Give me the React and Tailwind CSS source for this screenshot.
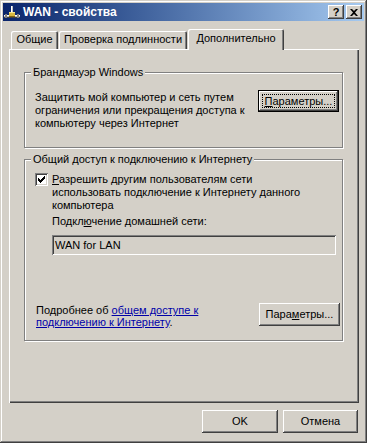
import React from "react";

const raised =
  "shadow-[inset_-1px_-1px_#404040,inset_1px_1px_#ffffff,inset_-2px_-2px_#808080,inset_2px_2px_#d4d0c8]";

function Button({ children, className = "", isDefault = false }) {
  if (isDefault) {
    return (
      <div className={"border border-black bg-[#d4d0c8] " + className}>
        <div className={"h-full w-full p-[3px] " + raised}>
          <div className="h-full w-full border border-dotted border-black flex items-center justify-center leading-none">
            {children}
          </div>
        </div>
      </div>
    );
  }
  return (
    <div className={"bg-[#d4d0c8] flex items-center justify-center leading-none " + raised + " " + className}>
      {children}
    </div>
  );
}

function Group({ title, className = "", children }) {
  return (
    <div
      className={
        "relative border border-[#808080] shadow-[inset_1px_1px_#ffffff,1px_1px_#ffffff] " + className
      }
    >
      <span className="absolute left-[6px] top-[-7px] bg-[#d4d0c8] px-[2px] leading-[13px]">{title}</span>
      {children}
    </div>
  );
}

function NetIcon() {
  return (
    <svg width="16" height="16" viewBox="0 0 16 16">
      <rect x="7" y="2" width="2" height="9" fill="#c0c0c0" />
      <rect x="7" y="2" width="1" height="9" fill="#ffffff" />
      <rect x="0" y="11" width="16" height="2" fill="#c0c0c0" />
      <rect x="0" y="11" width="16" height="1" fill="#ffffff" />
      <rect x="0" y="13" width="16" height="1" fill="#404040" />
      <rect x="5" y="8" width="6" height="4" fill="#d8b840" />
      <rect x="5" y="8" width="6" height="1" fill="#f8e890" />
      <rect x="5" y="12" width="6" height="1" fill="#806010" />
      <rect x="1" y="10" width="2" height="4" fill="#808080" />
      <rect x="13" y="10" width="2" height="4" fill="#808080" />
    </svg>
  );
}

export default function App() {
  return (
    <div className="w-[367px] h-[443px] bg-[#d4d0c8] p-[3px] flex flex-col text-[11px] text-black font-['Liberation_Sans',Arial,sans-serif] shadow-[inset_-1px_-1px_#404040,inset_1px_1px_#d4d0c8,inset_-2px_-2px_#808080,inset_2px_2px_#ffffff]">
      {/* title bar */}
      <div className="h-[18px] flex items-center bg-linear-to-r from-[#0a246a] to-[#a6caf0] pl-[1px] pr-[2px]">
        <NetIcon />
        <span className="ml-[3px] font-bold text-white text-[12px] leading-none">WAN - свойства</span>
        <div className="ml-auto flex gap-[2px]">
          <div className={"w-[16px] h-[14px] bg-[#d4d0c8] flex items-center justify-center font-bold text-[11px] leading-none " + raised}>
            ?
          </div>
          <div className={"w-[16px] h-[14px] bg-[#d4d0c8] flex items-center justify-center " + raised}>
            <svg width="8" height="7" viewBox="0 0 8 7">
              <path d="M0 0h2l2 2 2-2h2L5 3.5 8 7H6L4 5 2 7H0l3-3.5z" fill="#000" />
            </svg>
          </div>
        </div>
      </div>

      {/* tabs */}
      <div className="mt-[8px] h-[20px] flex items-end pl-[8px]">
        <div className="w-[47px] h-[18px] rounded-tl-[2px] rounded-tr-[2px] shadow-[inset_1px_1px_#ffffff,inset_-1px_0_#404040,inset_-2px_0_#808080] flex items-center justify-center leading-none pb-[1px]">
          Общие
        </div>
        <div className="ml-[1px] w-[128px] h-[18px] rounded-tl-[2px] rounded-tr-[2px] shadow-[inset_1px_1px_#ffffff,inset_-1px_0_#404040,inset_-2px_0_#808080] flex items-center justify-center leading-none pb-[1px]">
          Проверка подлинности
        </div>
        <div className="relative z-10 -mb-[1px] ml-[1px] w-[96px] h-[21px] bg-[#d4d0c8] rounded-tl-[2px] rounded-tr-[2px] shadow-[inset_1px_1px_#ffffff,inset_-1px_0_#404040,inset_-2px_0_#808080] flex items-center justify-center leading-none pb-[3px]">
          Дополнительно
        </div>
      </div>

      {/* panel */}
      <div className="ml-[6px] w-[350px] h-[354px] pl-[15px] shadow-[inset_1px_1px_#ffffff,inset_-1px_-1px_#404040,inset_-2px_-2px_#808080]">
        <Group title="Брандмауэр Windows" className="mt-[23px] w-[319px] h-[76px]">
          <div className="flex items-start pt-[17px] pl-[10px] pr-[3px]">
            <div className="mt-[1px] leading-[13px] flex-1">
              Защитить мой компьютер и сеть путем
              <br />
              ограничения или прекращения доступа к
              <br />
              компьютеру через Интернет
            </div>
            <Button isDefault className="w-[81px] h-[22px]">
              <span>
                <span className="underline">П</span>араметры...
              </span>
            </Button>
          </div>
        </Group>

        <Group title="Общий доступ к подключению к Интернету" className="mt-[11px] w-[319px] h-[182px] flex flex-col">
          <div className="flex items-start pt-[13px] pl-[10px]">
            <div className="w-[13px] h-[13px] bg-white shadow-[inset_1px_1px_#808080,inset_-1px_-1px_#ffffff,inset_2px_2px_#404040,inset_-2px_-2px_#d4d0c8] flex items-center justify-center">
              <svg width="7" height="7" viewBox="0 0 7 7">
                <path d="M0 2h1v1h1v1h1v-1h1v-1h1v-1h1v-1h1v3h-1v1h-1v1h-1v1h-1v1h-1v-1h-1v-1h-1v-1h-1z" fill="#000" />
              </svg>
            </div>
            <div className="ml-[4px] leading-[13px]">
              <span className="underline">Р</span>азрешить другим пользователям сети
              <br />
              использовать подключение к Интернету данного
              <br />
              компьютера
            </div>
          </div>
          <div className="pl-[27px] mt-[3px] leading-[13px]">
            Подкл<span className="underline">ю</span>чение домашней сети:
          </div>
          <div className="ml-[27px] mt-[7px] w-[284px] h-[20px] bg-[#d4d0c8] flex items-center pl-[3px] shadow-[inset_1px_1px_#808080,inset_-1px_-1px_#ffffff,inset_2px_2px_#404040,inset_-2px_-2px_#d4d0c8]">
            WAN for LAN
          </div>
          <div className="mt-auto flex items-start pl-[11px] pr-[2px] pb-[12px]">
            <div className="mt-[1px] leading-[12px] flex-1">
              Подробнее об{" "}
              <span className="text-[#0000a8] underline">общем доступе к</span>
              <br />
              <span className="text-[#0000a8] underline">подключению к Интернету</span>.
            </div>
            <Button className="w-[81px] h-[23px]">
              <span>
                Пара<span className="underline">м</span>етры...
              </span>
            </Button>
          </div>
        </Group>
      </div>

      {/* bottom buttons */}
      <div className="mt-[7px] flex justify-end pr-[6px] gap-[5px]">
        <Button className="w-[76px] h-[23px]">OK</Button>
        <Button className="w-[75px] h-[23px]">Отмена</Button>
      </div>
    </div>
  );
}
